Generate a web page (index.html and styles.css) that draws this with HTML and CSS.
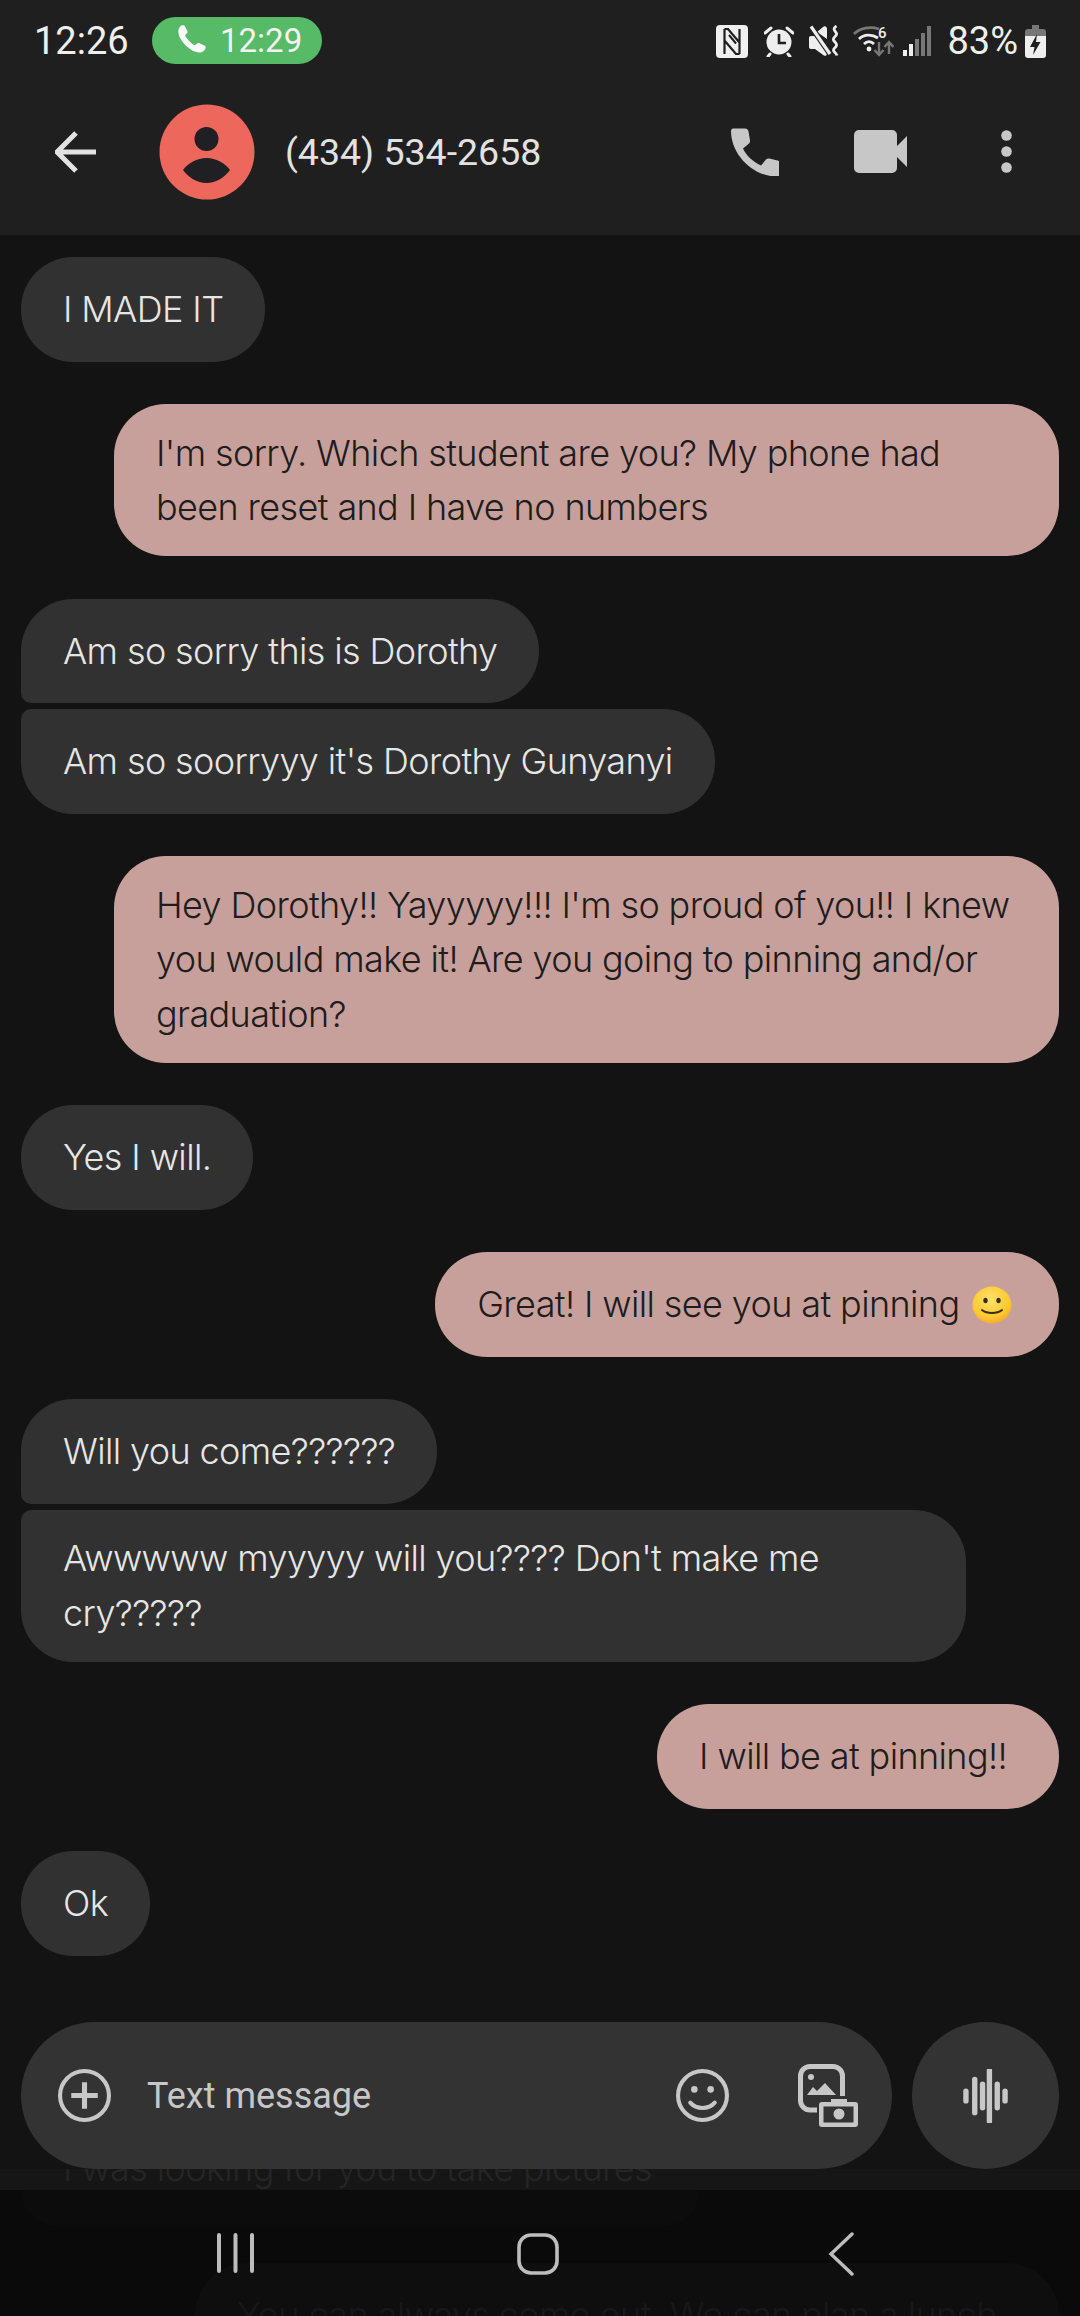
FILE: index.html
```html
<!DOCTYPE html>
<html lang="en">
<head>
<meta charset="utf-8">
<title>Messages</title>
<link rel="stylesheet" href="styles.css">
</head>
<body>
<div class="phone">
  <header class="top">
    <div class="status">
      <span class="clock">12:26</span>
      <span class="call-pill">
        <svg class="pill-phone" viewBox="0 0 28 28"><path fill="#fff" d="M3.500.600C5 -.2 6.400.2 7 1.500l2.200 4.300c.5 1 .3 2-.5 2.800L7 10.200c1.800 4 5.800 8 10 10.200l1.700-1.700c.8-.8 1.800-1 2.800-.5l4.800 2.300c1.300.6 1.700 2 .9 3.500-1.200 2.300-3.300 3.800-6 3.500C12.500 27 1.800 16.500.4 8 -.1 5 1.300 2 3.500.600z"/></svg>
        <span>12:29</span>
      </span>
      <span class="status-right">
        <svg class="s-nfc" viewBox="0 0 32 33"><rect width="32" height="33" rx="4" fill="#f0f0f0"/><path d="M8.500 4v25M8.500 4h3.500l11.500 13.500M23.500 29V4M23.500 29H20L8.500 15.500" fill="none" stroke="#1f1f1f" stroke-width="2.200"/><path d="M13 10l7 8.500" stroke="#1f1f1f" stroke-width="2"/></svg>
        <svg class="s-alarm" viewBox="0 0 30 32"><circle cx="15" cy="17" r="12.500" fill="#eee"/><path d="M15 9v9h7" fill="none" stroke="#1f1f1f" stroke-width="2.600"/><path d="M1 8l6-5M29 8l-6-5M6 29l-2 2.500M24 29l2 2.500" stroke="#eee" stroke-width="3" fill="none" stroke-linecap="round"/></svg>
        <svg class="s-mute" viewBox="0 0 30 32"><path fill="#eee" d="M0 13c0-1.200.8-2 2-2h5l11 10v7c0 3-2 3.500-3.500 2.200L6 24H2c-1.200 0-2-.8-2-2zM8 7l6-5c1.500-1.300 4-.8 4 2v10z"/><path d="M2 1.500L21 29" stroke="#1f1f1f" stroke-width="5.500"/><path d="M2 1.500L21 29" stroke="#eee" stroke-width="3.200"/><path d="M27.500 1c-5 3-1 5 0 7.500 1 2.500-4 3.500-3 6.500.6 2 3.500 3 3 5.500-.4 2-3.500 3-3 5 .4 1.500 3 3 3.500 5" fill="none" stroke="#eee" stroke-width="2.800"/></svg>
        <svg class="s-wifi" viewBox="0 0 41 32"><path d="M1 9C7 3 17 1 26 4" fill="none" stroke="#777" stroke-width="2.800"/><path d="M6 14c5-5 13-5 19-1M11 19c3-3 7-3 10 0" fill="none" stroke="#eee" stroke-width="2.800"/><circle cx="16" cy="24" r="2.400" fill="#eee"/><text x="25" y="13" class="wifi-six">6</text><path d="M26 17v13M21.500 25l4.500 5 4.500-5" fill="none" stroke="#777" stroke-width="2.400"/><path d="M36 29V17M31.500 22l4.500-5 4.500 5" fill="none" stroke="#777" stroke-width="2.400"/></svg>
        <svg class="s-signal" viewBox="0 0 28 30"><rect x="0" y="24" width="4" height="6" fill="#eee"/><rect x="6" y="18" width="4" height="12" fill="#eee"/><rect x="12" y="13" width="4" height="17" fill="#777"/><rect x="18" y="7" width="4" height="23" fill="#777"/><rect x="24" y="0" width="4" height="30" fill="#777"/></svg>
        <span class="battery-pct">83%</span>
        <svg class="s-batt" viewBox="0 0 21 33"><path fill="#777" d="M7 0h7v4h4a3 3 0 0 1 3 3v5H0V7a3 3 0 0 1 3-3h4z"/><path fill="#eee" d="M0 11h21v19a3 3 0 0 1-3 3H3a3 3 0 0 1-3-3z"/><path fill="#1f1f1f" d="M12 9l-7 13h4.500L8 30l7.500-13H11z"/></svg>
      </span>
    </div>
    <div class="appbar">
      <svg class="ic-back" viewBox="0 0 42 42"><path d="M41 21H4M21 2L2 21l19 19" fill="none" stroke="#e2e2e2" stroke-width="5"/></svg>
      <svg class="avatar" viewBox="0 0 96 96"><circle cx="48" cy="48" r="47.500" fill="#ee675c"/><circle cx="47.500" cy="35" r="12" fill="#1f1f24"/><path fill="#1f1f24" d="M24 66c5-7 14-12 23.500-12S66 59 71 66c-5 7-14 13-23.500 13S29 73 24 66z"/></svg>
      <span class="title">(434) 534-2658</span>
      <span class="appbar-actions">
        <svg class="ic-phone" viewBox="0 0 48 48"><path fill="#c7c7c7" d="M2 .500h12c2 0 3.500 1.500 3.500 3l1.500 9c.2 1.200-.3 2.300-1 3l-6 5c3 7 10 13 18 17l5-6c1-1 2.200-1.300 3.300-1l8.200 2c1.500.3 2.500 1.600 2.500 3v12.500c-1.500.5-3 .5-4 .5C21 48 0 26 0 3 0 2 .8.500 2 .500z"/></svg>
        <svg class="ic-video" viewBox="0 0 53 43"><path fill="#c7c7c7" d="M5 0h33a5 5 0 0 1 5 5v11l10-10v31L43 27v11a5 5 0 0 1-5 5H5a5 5 0 0 1-5-5V5a5 5 0 0 1 5-5z"/></svg>
        <svg class="ic-more" viewBox="0 0 11 43"><circle cx="5.500" cy="5.500" r="5.300" fill="#c7c7c7"/><circle cx="5.500" cy="21.500" r="5.300" fill="#c7c7c7"/><circle cx="5.500" cy="37.500" r="5.300" fill="#c7c7c7"/></svg>
      </span>
    </div>
  </header>

  <main class="thread">
    <div class="bubble one in gap">I MADE IT</div>
    <div class="bubble out gap">I'm sorry. Which student are you? My phone had been reset and I have no numbers</div>
    <div class="bubble one in tail-b">Am so sorry this is Dorothy</div>
    <div class="bubble one in gap tail-t">Am so soorryyy it's Dorothy Gunyanyi</div>
    <div class="bubble out gap">Hey Dorothy!! Yayyyyy!!! I'm so proud of you!! I knew you would make it! Are you going to pinning and/or graduation?</div>
    <div class="bubble one in gap">Yes I will.</div>
    <div class="bubble one out gap trail-emoji">Great! I will see you at pinning <svg class="emoji" viewBox="0 0 40 38"><defs><radialGradient id="face" cx=".45" cy=".35" r=".7"><stop offset="0" stop-color="#ffe36a"/><stop offset=".7" stop-color="#fdc92f"/><stop offset="1" stop-color="#f2a428"/></radialGradient></defs><ellipse cx="20" cy="19" rx="19.500" ry="18.500" fill="url(#face)"/><ellipse cx="13.500" cy="14.500" rx="2.200" ry="2.800" fill="#3d2c16"/><ellipse cx="26.500" cy="14.500" rx="2.200" ry="2.800" fill="#3d2c16"/><path d="M10 24c5 4 15 4 20 0" fill="none" stroke="#3d2c16" stroke-width="2" stroke-linecap="round"/></svg></div>
    <div class="bubble one in tail-b">Will you come??????</div>
    <div class="bubble in gap tail-t wide">Awwwww myyyyy will you???? Don't make me cry?????</div>
    <div class="bubble one out gap trail">I will be at pinning!!</div>
    <div class="bubble one in gap">Ok</div>
  </main>

  <section class="composer">
    <div class="field">
      <svg class="ic-plus" viewBox="0 0 52 52"><circle cx="26" cy="26" r="24" fill="none" stroke="#c7c7c7" stroke-width="4"/><path d="M26 13v26M13 26h26" stroke="#c7c7c7" stroke-width="5"/></svg>
      <span class="placeholder">Text message</span>
      <svg class="ic-smile" viewBox="0 0 52 52"><circle cx="26" cy="26" r="24" fill="none" stroke="#c7c7c7" stroke-width="4"/><circle cx="18" cy="20" r="3.200" fill="#c7c7c7"/><circle cx="34" cy="20" r="3.200" fill="#c7c7c7"/><path d="M14 33c6 7 18 7 24 0" fill="none" stroke="#c7c7c7" stroke-width="4" stroke-linecap="round"/></svg>
      <svg class="ic-media" viewBox="0 0 60 63"><path d="M19 46h-7a9.500 9.500 0 0 1-9.500-9.500V12A9.500 9.500 0 0 1 12 2.500h23A9.500 9.500 0 0 1 44.500 12v20" fill="none" stroke="#c7c7c7" stroke-width="5"/><circle cx="13" cy="13" r="3" fill="#c7c7c7"/><path fill="#c7c7c7" d="M9 31l6-8 4 4 8-8 11 12z"/><path fill="#c7c7c7" d="M21 41a3 3 0 0 1 3-3h9v-3h16v3h8a3 3 0 0 1 3 3v19a3 3 0 0 1-3 3H24a3 3 0 0 1-3-3z"/><rect x="25.500" y="42.500" width="30" height="16" fill="#333"/><circle cx="41" cy="50" r="5.500" fill="#c7c7c7"/></svg>
    </div>
    <button class="voice" type="button" aria-label="Voice message">
      <svg class="ic-wave" viewBox="0 0 46 54"><path d="M3 22v10M12 10v34M20 15v24M27 1v52M35 15v24M43 22v10" stroke="#c7c7c7" stroke-width="5.500" stroke-linecap="round" fill="none"/></svg>
    </button>
  </section>
  <div class="ghost-strip"><span class="ghost-text">I was looking for you to take pictures</span></div>
  <nav class="navbar">
    <div class="nav-icons">
      <svg class="nav-recent" viewBox="0 0 37 42"><path d="M2 3v36M18.500 3v36M35 3v36" stroke="#bdbdbd" stroke-width="4" stroke-linecap="round"/></svg>
      <svg class="nav-home" viewBox="0 0 42 42"><rect x="2" y="2" width="38" height="38" rx="12" fill="none" stroke="#bdbdbd" stroke-width="3.600"/></svg>
      <svg class="nav-back" viewBox="0 0 26 44"><path d="M24 2L3 22l21 20" fill="none" stroke="#bdbdbd" stroke-width="3.400" stroke-linecap="round"/></svg>
    </div>
    <div class="ghost-tail"></div>
    <div class="ghost-bubble"><span class="ghost-text2">You can always come out. We can plan a lunch</span></div>
  </nav>
</div>
</body>
</html>
```

FILE: styles.css
```css
* { box-sizing: border-box; }
html, body { margin: 0; padding: 0; background: #131313; }
.phone { width: 1080px; height: 2316px; overflow: hidden; display: flex; flex-direction: column; background: #131313; font-family: Roboto, "Noto Sans", sans-serif; }
svg { display: block; flex: none; }

.top { height: 235px; background: #1f1f1f; flex: none; }
.status { height: 82px; display: flex; align-items: center; padding: 0 34px 0 34px; color: #f0f0f0; }
.clock { font-size: 38px; width: 118px; }
.call-pill { width: 170px; height: 47px; border-radius: 24px; background: #57ba66; display: flex; align-items: center; gap: 14px; padding-left: 26px; color: #f4f4f4; font-size: 33px; margin-top: -1px; }
.pill-phone { width: 28px; height: 28px; margin-top: -4px; }
.status-right { margin-left: auto; display: flex; align-items: center; }
.s-nfc { width: 32px; height: 33px; margin-right: 16px; }
.s-alarm { width: 30px; height: 32px; margin-right: 15px; }
.s-mute { width: 30px; height: 32px; margin-right: 14px; }
.s-wifi { width: 41px; height: 32px; margin-right: 9px; }
.s-signal { width: 28px; height: 30px; margin-right: 16px; }
.wifi-six { font-size: 15px; fill: #eee; font-family: Roboto, sans-serif; font-weight: 500; }
.battery-pct { font-size: 38px; margin-right: 7px; }
.s-batt { width: 21px; height: 33px; }

.appbar { height: 155px; display: flex; align-items: center; padding: 0 68px 0 55px; margin-top: -8px; }
.ic-back { width: 42px; height: 42px; margin-right: 62px; }
.avatar { width: 96px; height: 96px; margin-right: 30px; }
.title { font-size: 37.500px; color: #e2e2e2; }
.appbar-actions { margin-left: auto; display: flex; align-items: center; }
.ic-phone { width: 48px; height: 48px; margin-right: 75px; }
.ic-video { width: 53px; height: 43px; margin-right: 94px; }
.ic-more { width: 11px; height: 43px; }

.thread { flex: 1; min-height: 0; padding: 22px 21px 0; display: flex; flex-direction: column; align-items: flex-start; font-family: Inter, Roboto, sans-serif; }
.bubble { font-size: 36px; font-weight: 300; letter-spacing: -0.62px; line-height: 54.500px; padding: 21.500px 42px; border-radius: 52px; max-width: 945px; }
.one { padding-top: 25px; padding-bottom: 25px; }
.in { background: #313131; color: #e6e6e6; margin-bottom: 6px; }
.out { background: #c8a09b; color: #201c1c; align-self: flex-end; }
.gap { margin-bottom: 42.500px; }
.tail-b { border-bottom-left-radius: 10px; }
.tail-t { border-top-left-radius: 10px; }
.wide { width: 945px; }
.trail { padding-right: 52px; }
.trail-emoji { padding-right: 47px; }
.emoji { display: inline-block; width: 40px; height: 38px; vertical-align: -7px; margin-left: 3px; }

.composer { flex: none; height: 147px; padding: 0 21px; display: flex; gap: 20px; }
.field { flex: 1; background: #333; border-radius: 74px; display: flex; align-items: center; padding: 0 34px 0 37px; }
.ic-plus { width: 53px; height: 53px; margin-right: 36px; }
.placeholder { font-size: 36px; color: #c7c7c7; flex: 1; }
.ic-smile { width: 53px; height: 53px; margin-right: 69px; }
.ic-media { width: 60px; height: 63px; }
.voice { width: 147px; height: 147px; border: 0; padding: 0; border-radius: 50%; background: #333; display: flex; align-items: center; justify-content: center; }
.ic-wave { width: 45px; height: 54px; }

.ghost-strip { flex: none; height: 21px; background: #161616; overflow: hidden; padding-left: 63px; }
.ghost-text { display: block; font-family: Inter, Roboto, sans-serif; font-size: 36px; font-weight: 300; letter-spacing: -0.62px; line-height: 54.500px; margin-top: -28px; color: #252525; }
.navbar { flex: none; height: 126px; background: #0a0a0a; position: relative; overflow: hidden; }
.nav-icons { position: absolute; inset: 0; z-index: 1; }
.nav-recent { position: absolute; left: 217px; top: 42px; width: 37px; height: 42px; }
.nav-home { position: absolute; left: 517px; top: 43px; width: 42px; height: 42px; }
.nav-back { position: absolute; left: 828px; top: 42px; width: 26px; height: 44px; }
.ghost-tail { margin: 0 380px 0 21px; height: 36px; border-radius: 0 0 52px 52px; background: #0c0c0c; }
.ghost-bubble { margin: 37px 21px 0 195px; height: 200px; border-radius: 52px; background: #0f0e0e; padding: 25px 42px; font-family: Inter, Roboto, sans-serif; font-size: 36px; font-weight: 300; letter-spacing: -0.62px; line-height: 54.500px; color: #191818; white-space: nowrap; }
```
